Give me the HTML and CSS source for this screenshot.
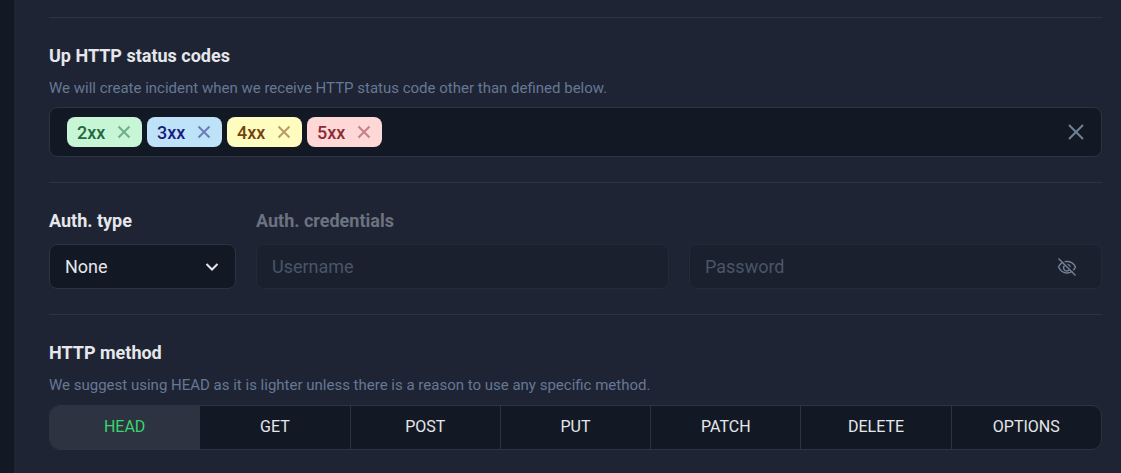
FILE: index.html
```html
<!DOCTYPE html>
<html lang="en">

<head>
    <meta charset="UTF-8">
    <meta name="viewport" content="width=device-width, initial-scale=1.0">
    <title>Monitor settings</title>
    <link rel="stylesheet" href="styles.css">
</head>

<body>
    <form class="panel">
        <section class="section">
            <h2 class="title">Up HTTP status codes</h2>
            <p class="hint">We will create incident when we receive HTTP status code other than defined below.</p>
            <div class="tag-box">
                <span class="tag tag-green">2xx
                    <button type="button" class="tag-remove" aria-label="Remove 2xx"><svg class="cross" viewBox="0 0 14 14"><path d="M1.5 1.5l11 11M12.5 1.5l-11 11"/></svg></button>
                </span>
                <span class="tag tag-blue">3xx
                    <button type="button" class="tag-remove" aria-label="Remove 3xx"><svg class="cross" viewBox="0 0 14 14"><path d="M1.5 1.5l11 11M12.5 1.5l-11 11"/></svg></button>
                </span>
                <span class="tag tag-yellow">4xx
                    <button type="button" class="tag-remove" aria-label="Remove 4xx"><svg class="cross" viewBox="0 0 14 14"><path d="M1.5 1.5l11 11M12.5 1.5l-11 11"/></svg></button>
                </span>
                <span class="tag tag-red">5xx
                    <button type="button" class="tag-remove" aria-label="Remove 5xx"><svg class="cross" viewBox="0 0 14 14"><path d="M1.5 1.5l11 11M12.5 1.5l-11 11"/></svg></button>
                </span>
                <button type="button" class="clear" aria-label="Clear all"><svg class="clear-icon" viewBox="0 0 16 16"><path d="M1 1l14 14M15 1L1 15"/></svg></button>
            </div>
        </section>

        <section class="section auth">
            <div class="auth-type">
                <label class="title" for="auth-type">Auth. type</label>
                <div class="field">
                    <select id="auth-type" class="control">
                        <option>None</option>
                        <option>Basic</option>
                    </select>
                    <svg class="chevron" viewBox="0 0 14 8"><path d="M1.5 1L7 6.5L12.5 1"/></svg>
                </div>
            </div>
            <div class="auth-credentials">
                <label class="title" for="username">Auth. credentials</label>
                <div class="credentials">
                    <input type="text" id="username" class="control" placeholder="Username" disabled>
                    <div class="field">
                        <input type="password" id="password" class="control" placeholder="Password" aria-label="Password" disabled>
                        <button type="button" class="reveal" aria-label="Show password" disabled>
                            <svg class="eye" viewBox="0 0 20 20">
                                <path d="M1.5 10C3.5 6 6.5 4.500 10 4.500s6.500 1.500 8.500 5.500c-2 4-5 6-8.500 6s-6.500-2-8.500-6z"/>
                                <path d="M7.500 8.500a3.200 3.200 0 1 0 4.800 4.200"/>
                                <path d="M10 7.500a3 3 0 0 1 3 3"/>
                                <path class="eye-gap" d="M2.500 .5l17 17"/>
                                <path d="M1.500 1.500l17 17"/>
                            </svg>
                        </button>
                    </div>
                </div>
            </div>
        </section>

        <section class="section">
            <h2 class="title">HTTP method</h2>
            <p class="hint">We suggest using HEAD as it is lighter unless there is a reason to use any specific method.</p>
            <div class="methods" role="radiogroup" aria-label="HTTP method">
                <label class="method"><input type="radio" name="method" checked><span>HEAD</span></label>
                <label class="method"><input type="radio" name="method"><span>GET</span></label>
                <label class="method"><input type="radio" name="method"><span>POST</span></label>
                <label class="method"><input type="radio" name="method"><span>PUT</span></label>
                <label class="method"><input type="radio" name="method"><span>PATCH</span></label>
                <label class="method"><input type="radio" name="method"><span>DELETE</span></label>
                <label class="method"><input type="radio" name="method"><span>OPTIONS</span></label>
            </div>
        </section>
    </form>
</body>

</html>
```
FILE: styles.css
```css
* {
    margin: 0;
    padding: 0;
    box-sizing: border-box;
}

body {
    padding-left: 14px;
    background-color: #131924;
    color: #e5e7eb;
    font-family: Roboto, sans-serif;
}

button {
    border: none;
    background: none;
    color: inherit;
    cursor: pointer;
}

svg {
    display: block;
    fill: none;
    stroke: currentColor;
}

.panel {
    min-height: 100vh;
    padding: 17px 19px 0 35px;
    background-color: #1e2433;
}

.section {
    padding: 24px 0 25px;
    border-top: 1px solid #2d3340;
}

.section:last-child {
    padding-bottom: 22px;
}

.title {
    display: block;
    font-size: 18px;
    font-weight: bold;
    line-height: 28px;
}

.hint {
    margin-top: 8px;
    color: #667896;
    font-size: 15px;
    line-height: 20px;
}

/* status codes */
.tag-box {
    display: flex;
    align-items: center;
    gap: 5px;
    height: 50px;
    margin-top: 9px;
    padding: 0 17px;
    background-color: #131924;
    border: 1px solid #2d3340;
    border-radius: 8px;
}

.tag {
    display: flex;
    align-items: center;
    justify-content: space-between;
    width: 75px;
    height: 30px;
    padding: 0 11px 0 10px;
    border-radius: 8px;
    font-size: 18px;
    font-weight: 500;
}

.tag-green {
    background-color: #c6f6d5;
    color: #22693f;
}

.tag-blue {
    background-color: #bee3f8;
    color: #1a1a80;
}

.tag-yellow {
    background-color: #fefcbf;
    color: #744210;
}

.tag-red {
    background-color: #fed7d7;
    color: #8b2c35;
}

.tag-remove {
    opacity: 0.5;
}

.cross {
    width: 14px;
    height: 14px;
    stroke-width: 2;
}

.clear {
    margin-left: auto;
    color: #718096;
}

.clear-icon {
    width: 16px;
    height: 16px;
    stroke-width: 2;
}

/* authentication */
.auth {
    display: flex;
    gap: 20px;
}

.auth-type {
    width: 187px;
}

.auth-credentials {
    flex: 1;
}

.auth-credentials .title {
    color: #6b7280;
}

.credentials {
    display: grid;
    grid-template-columns: 1fr 1fr;
    gap: 20px;
}

.field {
    position: relative;
}

.control {
    display: block;
    width: 100%;
    height: 45px;
    margin-top: 9px;
    padding: 0 15px;
    appearance: none;
    background-color: #131924;
    border: 1px solid #2d3340;
    border-radius: 8px;
    color: #e5e7eb;
    font-family: inherit;
    font-size: 18px;
}

.control:disabled {
    background-color: #1a202d;
    border-color: #242a38;
    opacity: 1;
}

.control::placeholder {
    color: #4a5568;
}

.chevron {
    position: absolute;
    right: 17px;
    bottom: 18px;
    width: 14px;
    height: 8px;
    stroke-width: 2;
    pointer-events: none;
}

.reveal {
    position: absolute;
    right: 25px;
    bottom: 12px;
    color: #718096;
}

.eye {
    width: 20px;
    height: 20px;
    stroke-width: 1.5;
}

.eye-gap {
    stroke: #1a202d;
}

/* method switch */
.methods {
    display: flex;
    height: 45px;
    margin-top: 10px;
    overflow: hidden;
    background-color: #131924;
    border: 1px solid #2d3340;
    border-radius: 10px;
}

.method {
    display: flex;
    flex: 1;
    cursor: pointer;
}

.method + .method {
    border-left: 1px solid #2d3340;
}

.method input {
    appearance: none;
}

.method span {
    flex: 1;
    font-size: 16px;
    line-height: 42px;
    text-align: center;
}

.method input:checked + span {
    background-color: #2d3340;
    color: #38d66b;
}
```
